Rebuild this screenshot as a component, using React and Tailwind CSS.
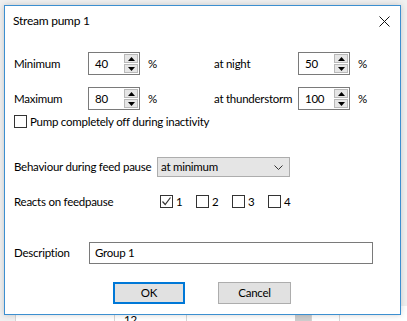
import React from 'react';

const SpinBox = ({ value }) => (
  <div className="flex h-[23px] w-[52px] border border-[#7a7a7a] bg-white">
    <div className="flex flex-1 items-center pl-[6px]">{value}</div>
    <div className="flex w-[16px] flex-col gap-[1px] p-[1px]">
      <div className="flex flex-1 items-center justify-center border border-[#b9b9b9] bg-[#e6e6e6]">
        <svg width="7" height="4" viewBox="0 0 7 4"><path d="M3.5 0 L7 4 L0 4 Z" fill="#000" /></svg>
      </div>
      <div className="flex flex-1 items-center justify-center border border-[#b9b9b9] bg-[#e6e6e6]">
        <svg width="7" height="4" viewBox="0 0 7 4"><path d="M0 0 L7 0 L3.5 4 Z" fill="#000" /></svg>
      </div>
    </div>
  </div>
);

const CheckBox = ({ checked }) => (
  <div className="flex h-[13px] w-[13px] shrink-0 items-center justify-center border border-[#333] bg-white">
    {checked && (
      <svg width="11" height="11" viewBox="0 0 11 11">
        <path d="M1.5 5.5 L4.2 8.5 L9.5 1.5" fill="none" stroke="#333" strokeWidth="1.2" />
      </svg>
    )}
  </div>
);

const App = () => {
  return (
    <div className="relative h-[321px] w-[407px] overflow-hidden whitespace-nowrap bg-[#f0f0f0] text-[11.5px] tracking-[-0.25px] text-black" style={{ fontFamily: 'Lato, "Noto Sans", sans-serif' }}>
      {/* table behind the dialog */}
      <div className="flex h-full flex-col">
        <div className="h-[306px]" />
        <div className="flex h-[15px] bg-white">
          <div className="w-[16px] border-r border-[#d5d5d5] bg-[#f0f0f0]" />
          <div className="w-[99px] border-r border-[#d5d5d5]" />
          <div className="w-[72px] border-r border-[#d5d5d5] pl-[9px] pt-[8px] leading-[12px]">12</div>
          <div className="w-[108px]" />
          <div className="w-[16px] bg-[#cdcdcd]" />
          <div className="w-[1px] bg-[#d5d5d5]" />
          <div className="w-[28px] border-r border-[#d5d5d5]" />
        </div>
      </div>

      {/* dialog */}
      <div className="absolute left-[4px] top-[5px] flex h-[310px] w-[397px] flex-col border border-[#3c8fd0] bg-white shadow-[0_0_6px_rgba(0,0,0,0.18)]">
        <div className="flex h-[30px] items-center justify-between pl-[8px] pr-[10px]">
          <span className="text-[12px]">Stream pump 1</span>
          <svg width="11" height="11" viewBox="0 0 11 11">
            <path d="M0.5 0.5 L10.5 10.5 M10.5 0.5 L0.5 10.5" stroke="#111" strokeWidth="1" />
          </svg>
        </div>

        <div className="flex flex-col px-[9px]">
          <div className="mt-[16px] flex h-[23px] items-center">
            <span className="w-[74px]">Minimum</span>
            <SpinBox value="40" />
            <span className="w-[74px] pl-[8px]">%</span>
            <span className="w-[84px]">at night</span>
            <SpinBox value="50" />
            <span className="pl-[8px]">%</span>
          </div>
          <div className="mt-[12px] flex h-[23px] items-center">
            <span className="w-[74px]">Maximum</span>
            <SpinBox value="80" />
            <span className="w-[74px] pl-[8px]">%</span>
            <span className="w-[84px]">at thunderstorm</span>
            <SpinBox value="100" />
            <span className="pl-[8px]">%</span>
          </div>

          <div className="mt-[5px] flex h-[13px] items-center gap-[3px]">
            <CheckBox />
            <span>Pump completely off during inactivity</span>
          </div>

          <div className="mt-[29px] flex h-[20px] items-center">
            <span className="w-[143px]">Behaviour during feed pause</span>
            <div className="flex h-[20px] w-[133px] items-center justify-between border border-[#adadad] bg-[#e5e5e5] pl-[3px] pr-[6px]">
              <span>at minimum</span>
              <svg width="9" height="5" viewBox="0 0 9 5">
                <path d="M0.5 0.5 L4.5 4.5 L8.5 0.5" fill="none" stroke="#333" strokeWidth="1" />
              </svg>
            </div>
          </div>

          <div className="mt-[18px] flex h-[13px] items-center">
            <span className="w-[146px]">Reacts on feedpause</span>
            {[1, 2, 3, 4].map((n) => (
              <div key={n} className="flex w-[36px] items-center gap-[3px]">
                <CheckBox checked={n === 1} />
                <span>{n}</span>
              </div>
            ))}
          </div>

          <div className="mt-[34px] flex h-[22px] items-center">
            <span className="w-[75px]">Description</span>
            <div className="flex h-[22px] w-[284px] items-center border border-[#7a7a7a] pl-[5px]">Group 1</div>
          </div>

          <div className="mt-[18px] flex h-[22px] items-center pl-[99px]">
            <div className="flex h-[22px] w-[72px] items-center justify-center border-2 border-[#0078d7] bg-[#e1e1e1]">OK</div>
            <div className="ml-[33px] flex h-[22px] w-[73px] items-center justify-center border border-[#adadad] bg-[#e1e1e1]">Cancel</div>
          </div>
        </div>
      </div>
    </div>
  );
};

export default App;
